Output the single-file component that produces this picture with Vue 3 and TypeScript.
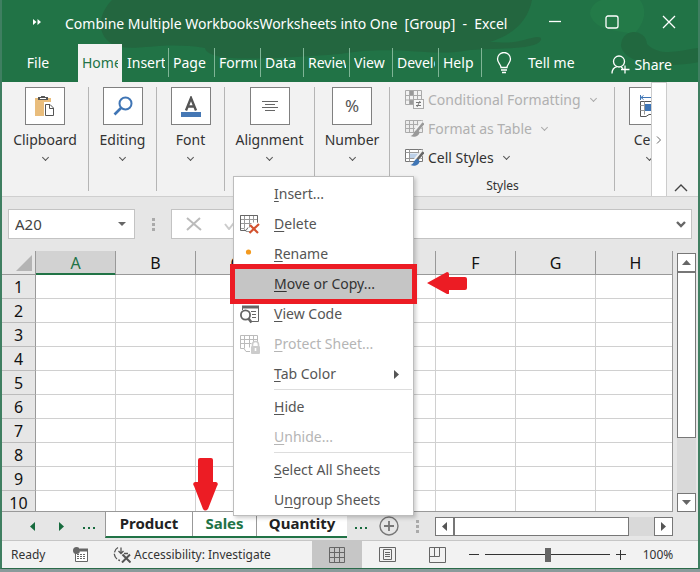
<script setup lang="ts">
import { ref } from 'vue'

interface RibbonTab {
  label: string
  width: string
  active?: boolean
}
interface MenuEntry {
  pre?: string
  key: string
  rest: string
  icon?: 'delete' | 'rename' | 'code' | 'protect'
  disabled?: boolean
  active?: boolean
  submenu?: boolean
  divider?: boolean
}

const tabs: RibbonTab[] = [
  { label: 'Home', width: 'medium', active: true },
  { label: 'Insert', width: 'medium' },
  { label: 'Page Layout', width: 'medium page' },
  { label: 'Formulas', width: 'medium' },
  { label: 'Data', width: 'small' },
  { label: 'Review', width: 'medium' },
  { label: 'View', width: 'small' },
  { label: 'Developer', width: 'medium' },
  { label: 'Help', width: 'small' },
]

const menu: MenuEntry[] = [
  { key: 'I', rest: 'nsert...' },
  { key: 'D', rest: 'elete', icon: 'delete' },
  { key: 'R', rest: 'ename', icon: 'rename' },
  { key: 'M', rest: 'ove or Copy...', active: true },
  { key: 'V', rest: 'iew Code', icon: 'code' },
  { key: 'P', rest: 'rotect Sheet...', icon: 'protect', disabled: true },
  { key: 'T', rest: 'ab Color', submenu: true },
  { key: 'H', rest: 'ide', divider: true },
  { key: 'U', rest: 'nhide...', disabled: true },
  { key: 'S', rest: 'elect All Sheets', divider: true },
  { pre: 'U', key: 'n', rest: 'group Sheets' },
]

const columns = ['A', 'B', 'C', 'D', 'E', 'F', 'G', 'H']
const rows = Array.from({ length: 10 }, (_, i) => i + 1)
const cellName = ref('A20')
const formula = ref('')
const zoom = ref(50)
</script>

<template>
  <div class="window">
    <header class="top">
      <svg class="pattern" viewBox="0 0 700 82" preserveAspectRatio="xMidYMin slice" aria-hidden="true">
        <path d="M112 0C98 14 96 34 112 44C130 54 160 40 205 48C208 62 260 60 340 54C400 44 430 58 470 50C500 48 536 50 541 40C542 35 534 37 524 40C510 44 500 42 490 42C515 34 528 20 532 0Z" fill="#23663f" />
        <path d="M590 14c0-10 12-18 24-14h26c10 14 0 28-6 34-20-4-40-4-44-20z" fill="#237a48" />
        <path d="M621 46a13 13 0 0 1 26-2c14 14 34 6 52 4v14c-30 6-74 4-78-16z" fill="#21683f" />
      </svg>
      <div class="titlebar">
        <button class="more-quick" aria-label="More quick access commands">
          <svg width="8" height="6" viewBox="0 0 8 6"><path d="M0 0l3.500 3L0 6zM4.500 0L8 3 4.500 6z" fill="#fff" /></svg>
        </button>
        <h1>Combine Multiple WorkbooksWorksheets into One&nbsp; [Group]&nbsp; -&nbsp; Excel</h1>
        <div class="window-buttons">
          <button aria-label="Minimize"><svg width="14" height="14" viewBox="0 0 14 14"><path d="M1 6.500h12" /></svg></button>
          <button aria-label="Maximize"><svg width="14" height="14" viewBox="0 0 14 14"><rect x="1" y="1" width="12" height="12" rx="2" /></svg></button>
          <button aria-label="Close"><svg width="14" height="14" viewBox="0 0 14 14"><path d="M1 1l12 12M13 1L1 13" /></svg></button>
        </div>
      </div>
      <nav class="tabs">
        <button class="file">File</button>
        <button v-for="t in tabs" :key="t.label" class="tab" :class="[t.width, { active: t.active }]"><span>{{ t.label }}</span></button>
        <button class="tell">
          <svg width="16" height="22" viewBox="0 0 16 22" fill="none" stroke="#fff" stroke-width="1.300"><path d="M5 15.500C5 12.500 1.500 11 1.500 7a6.500 6.500 0 0 1 13 0c0 4-3.500 5.500-3.500 8.500z" /><path d="M5 18h6M6 20.500h4" stroke-width="1.600" /></svg>
          <span>Tell me</span>
        </button>
        <button class="share">
          <svg width="19" height="20" viewBox="0 0 19 20" fill="none" stroke="#fff" stroke-width="1.300"><circle cx="8" cy="6.500" r="5.500" /><path d="M1 18.500c0-4 2-6 5-6.800M10 12l2 1.500M14 10.500v8M10 14.500h8.500" /></svg>
          <span>Share</span>
        </button>
      </nav>
    </header>

    <section class="ribbon">
      <div class="group clipboard">
        <button><span class="box">
          <svg width="20" height="21" viewBox="0 0 20 21"><rect x="0" y="2" width="16" height="18" fill="#e9bd7c" /><path d="M3 1h3a2 2 0 0 1 4 0h3v3H3z" fill="#555" /><path d="M5 2.500h6" stroke="#fff" /><path d="M10.500 7.500h5l3 3V19.500h-8z" fill="#fff" stroke="#fff" stroke-width="3" /><path d="M10.500 8.500h4.500l3.500 3.500v7.500h-8zM14.500 8.500v4h4" fill="#fff" stroke="#555" /></svg>
        </span><span>Clipboard</span><i class="chev" /></button>
      </div>
      <div class="group">
        <button><span class="box">
          <svg width="20" height="20" viewBox="0 0 20 20" fill="none" stroke="#3f75b5" stroke-width="2"><circle cx="12.500" cy="7.500" r="6" /><path d="M8 12L1.500 18.500" stroke-width="2.600" /></svg>
        </span><span>Editing</span><i class="chev" /></button>
      </div>
      <div class="group">
        <button><span class="box">
          <svg width="20" height="21" viewBox="0 0 20 21"><path d="M5 14.500L10 2l5 12.500M7 10.500h6" fill="none" stroke="#555" stroke-width="2.400" /><rect y="16" width="20" height="5" fill="#4577b4" /></svg>
        </span><span>Font</span><i class="chev" /></button>
      </div>
      <div class="group alignment">
        <button><span class="box">
          <svg width="16" height="12" viewBox="0 0 16 12" stroke="#666"><path d="M0 1.500h16M3 4.500h10M0 7.500h16M3 10.500h10" /></svg>
        </span><span>Alignment</span><i class="chev" /></button>
      </div>
      <div class="group number">
        <button><span class="box percent">%</span><span>Number</span><i class="chev" /></button>
      </div>
      <div class="group styles">
        <button disabled>
          <svg width="19" height="19" viewBox="0 0 19 19" fill="none" stroke="#aaa"><path d="M.5.500h16v14H.5zM.5 5.500h16M.5 10h16M4.500.500v14M8.500.500v14M12.500.500v14" /><path d="M4.500.500h4v5h-4zM4.500 10h4v4.500h-4z" fill="#999" /><rect x="8.500" y="9.500" width="10" height="9" fill="#f7f7f7" /><path d="M11 12.500h5M11 15.500h5M15 11l-3 6" stroke="#777" /></svg>
          <span>Conditional Formatting</span><i class="chev" />
        </button>
        <button disabled>
          <svg width="19" height="19" viewBox="0 0 19 19" fill="none" stroke="#aaa"><path d="M.5 1.500h17v12H.5z" fill="#ececec" /><path d="M.5 5.500h17M.5 9.500h17M4.500 1.500v12M8.500 1.500v12M12.500 1.500v12" /><path d="M18.500 3L11 12" stroke="#f2f2f2" stroke-width="5" /><path d="M18.500 4L12 12" stroke="#999" stroke-width="2.600" /><path d="M12.500 11c-4 0-3 5-7 6 4 2 9 0 9-4z" fill="#999" stroke="none" /></svg>
          <span>Format as Table</span><i class="chev" />
        </button>
        <button>
          <svg width="19" height="19" viewBox="0 0 19 19" fill="none" stroke="#777"><path d="M.5 1.500h17v12H.5z" fill="#fff" /><path d="M4.500 5.500h10v5h-10z" fill="#bcd0e8" stroke="none" /><path d="M.5 4.500h17M.5 10.500h17M4.500 1.500v12M13.500 1.500v12" stroke="#999" /><path d="M18.500 3L11 12" stroke="#f2f2f2" stroke-width="5" /><path d="M18.500 4L12 12" stroke="#666" stroke-width="2.600" /><path d="M12.500 11c-4 0-3 5-7 6 4 2 9 0 9-4z" fill="#3f75b5" stroke="none" /></svg>
          <span>Cell Styles</span><i class="chev" />
        </button>
        <h2>Styles</h2>
      </div>
      <div class="group cells">
        <button><span class="box">
          <svg width="20" height="22" viewBox="0 0 20 22" fill="none" stroke="#555"><path d="M1 2.500h18M1.500 0v5M18.500 0v5M4.500.500L2 2.500l2.500 2" stroke="#3f75b5" /><path d="M1.500 6.500h17v13H10l-3 2H1.500z" /><path d="M1.500 10.500h17M1.500 15.500h17M5.500 6.500v13M14.500 6.500v13" stroke="#999" /><path d="M6 9h8v7H6z" fill="#3f75b5" stroke="none" /></svg>
        </span><span>Cells</span><i class="chev" /></button>
      </div>
      <button class="scroll-ribbon" aria-label="Scroll ribbon"><svg width="6" height="8" viewBox="0 0 6 8" fill="none" stroke="#666"><path d="M1 .5L4.500 4 1 7.500" /></svg></button>
      <button class="collapse" aria-label="Collapse ribbon"><svg width="14" height="8" viewBox="0 0 14 8" fill="none" stroke="#444" stroke-width="1.400"><path d="M1 7l6-6 6 6" /></svg></button>
    </section>

    <section class="formula-bar">
      <div class="name-box">
        <input v-model="cellName" aria-label="Name box" />
        <button aria-label="Show names"><svg width="8" height="4" viewBox="0 0 8 4"><path d="M0 0h8L4 4z" fill="#666" /></svg></button>
      </div>
      <span class="grip"><i /><i /><i /></span>
      <div class="formula">
        <button aria-label="Cancel"><svg width="16" height="14" viewBox="0 0 16 14" fill="none" stroke="#bbb" stroke-width="2"><path d="M1 1l14 12M14 1L1 13" /></svg></button>
        <button aria-label="Enter"><svg width="14" height="12" viewBox="0 0 14 12" fill="none" stroke="#ccc" stroke-width="2"><path d="M1 6l4 5 8-10" /></svg></button>
        <input v-model="formula" aria-label="Formula" />
        <button aria-label="Expand formula bar"><svg width="10" height="7" viewBox="0 0 10 7" fill="none" stroke="#666" stroke-width="2.400"><path d="M1 1l4 4 4-4" /></svg></button>
      </div>
    </section>

    <section class="sheet">
      <div class="grid-wrap">
        <table>
          <colgroup><col class="row-col" /><col v-for="c in columns" :key="c" class="cell-col" /></colgroup>
          <thead>
            <tr>
              <th class="corner"><svg width="16" height="16" viewBox="0 0 16 16"><path d="M16 0v16H0z" fill="#b4b4b4" /></svg></th>
              <th v-for="c in columns" :key="c" scope="col" :class="{ selected: c === 'A' }">{{ c }}</th>
            </tr>
          </thead>
          <tbody>
            <tr v-for="r in rows" :key="r"><th scope="row">{{ r }}</th><td v-for="c in columns" :key="c" /></tr>
          </tbody>
        </table>
      </div>
      <div class="vscroll">
        <button aria-label="Scroll up"><svg width="9" height="5" viewBox="0 0 9 5"><path d="M0 5h9L4.500 0z" fill="#666" /></svg></button>
        <div class="vthumb" />
        <div class="vtrack" />
        <button aria-label="Scroll down"><svg width="9" height="5" viewBox="0 0 9 5"><path d="M0 0h9L4.500 5z" fill="#666" /></svg></button>
      </div>
    </section>

    <section class="sheet-bar">
      <div class="sheet-nav">
        <button aria-label="Previous sheet"><svg width="5" height="9" viewBox="0 0 5 9"><path d="M5 0v9L0 4.500z" fill="#176b3e" /></svg></button>
        <button aria-label="Next sheet"><svg width="5" height="9" viewBox="0 0 5 9"><path d="M0 0v9l5-4.500z" fill="#176b3e" /></svg></button>
        <button class="dots" aria-label="More sheets"><i /><i /><i /></button>
      </div>
      <div class="sheet-tabs">
        <button>Product</button>
        <button class="current">Sales</button>
        <button>Quantity</button>
      </div>
      <button class="dots" aria-label="More sheets"><i /><i /><i /></button>
      <button class="add" aria-label="New sheet"><svg width="20" height="20" viewBox="0 0 20 20" fill="none" stroke="#777"><circle cx="10" cy="10" r="9" stroke-width="1.400" /><path d="M10 5v10M5 10h10" stroke-width="1.800" /></svg></button>
      <span class="grip"><i /><i /><i /></span>
      <div class="hscroll">
        <button aria-label="Scroll left"><svg width="5" height="9" viewBox="0 0 5 9"><path d="M5 0v9L0 4.500z" fill="#555" /></svg></button>
        <div class="hthumb" />
        <div class="htrack" />
        <button aria-label="Scroll right"><svg width="5" height="9" viewBox="0 0 5 9"><path d="M0 0v9l5-4.500z" fill="#555" /></svg></button>
      </div>
    </section>

    <footer class="status">
      <span class="ready">Ready</span>
      <button class="macro" aria-label="Record macro"><svg width="15" height="15" viewBox="0 0 15 15"><path d="M2.500 2.500h12v12h-12z" fill="#fff" stroke="#666" /><path d="M7 1.500h8v3H7z" fill="#666" /><path d="M4 7.500h9M4 9.500h9M4 11.500h9" stroke="#666" stroke-dasharray="2 1" /><circle cx="3.500" cy="3.500" r="3.500" fill="#666" /></svg></button>
      <button class="access"><svg width="19" height="17" viewBox="0 0 19 17" fill="none" stroke="#555" stroke-width="1.300"><path d="M6 1.500a7 7 0 0 0 2 13" stroke-dasharray="6 1.500" /><path d="M9 1.500v6M6.500 5L9 7.500 11.500 5M12 7.500h4" /><path d="M10.500 8.500l8 8M18 8.500l-8 8" stroke-width="2" /></svg><span>Accessibility: Investigate</span></button>
      <div class="views">
        <button class="on" aria-label="Normal view"><svg width="16" height="16" viewBox="0 0 16 16" fill="none" stroke="#666"><path d="M.5.500h15v15H.5zM.5 5.500h15M.5 10.500h15M5.500.500v15M10.500.500v15" /></svg></button>
        <button aria-label="Page layout view"><svg width="17" height="15" viewBox="0 0 17 15" fill="none" stroke="#666"><path d="M.5.500h16v14H.5zM4.500 2.500h8v10h-8zM6 5.500h5M6 7.500h5M6 9.500h5" /></svg></button>
        <button aria-label="Page break preview"><svg width="17" height="16" viewBox="0 0 17 16" fill="none" stroke="#666"><path d="M.5.500h16v15H.5zM.5 9.500h10v-9M5.500.500v9" /></svg></button>
      </div>
      <div class="zoom">
        <button aria-label="Zoom out"><svg width="10" height="10" viewBox="0 0 10 10" stroke="#333"><path d="M0 4.500h10" /></svg></button>
        <input v-model.number="zoom" type="range" min="0" max="100" aria-label="Zoom" />
        <button aria-label="Zoom in"><svg width="10" height="10" viewBox="0 0 10 10" stroke="#333"><path d="M0 4.500h10M4.500 0v10" /></svg></button>
      </div>
      <button class="percentage">100%</button>
    </footer>

    <div class="menu" role="menu">
      <template v-for="m in menu" :key="m.rest">
        <hr v-if="m.divider" />
        <button role="menuitem" :disabled="m.disabled" :class="{ active: m.active }">
          <span class="mi">
            <svg v-if="m.icon === 'delete'" width="20" height="19" viewBox="0 0 20 19" fill="none" stroke="#999"><path d="M10 16.500H6l-2-3H.5v-13h17V8M.5 4.500h17M.5 8.500h11M4.500.500v13M9.500.500v12M13.500.500v7" /><path d="M17.500 7V.5H.5v15H6l2-3" stroke="#666" /><path d="M10 10l8 8M19 9l-9.500 9" stroke="#d3522f" stroke-width="2.200" /></svg>
            <svg v-else-if="m.icon === 'rename'" width="20" height="19" viewBox="0 0 20 19"><circle cx="8.500" cy="7" r="2.600" fill="#f39a1f" /></svg>
            <svg v-else-if="m.icon === 'code'" width="20" height="19" viewBox="0 0 20 19" fill="none" stroke="#666"><path d="M2.500 5V1.500h16v15h-8" /><path d="M2 2h17" stroke-width="3" /><path d="M11 6.500h5M12 9.500h4M12 12.500h4" /><circle cx="5.500" cy="10" r="4.600" stroke-width="1.800" fill="#fff" /><path d="M8.500 13.500l3 4" stroke-width="2.600" /></svg>
            <svg v-else-if="m.icon === 'protect'" width="20" height="19" viewBox="0 0 20 19" fill="none" stroke="#bbb"><path d="M10 16.500H6l-2-3H.5v-13h17V8M.5 4.500h17M.5 8.500h11M4.500.500v13M9.500.500v12M13.500.500v7" /><rect x="11" y="11" width="9" height="8" rx="1" fill="#ccc" stroke="none" /><path d="M12.500 11V9.500a3 3 0 0 1 6 0V11" stroke="#ccc" stroke-width="1.600" /><path d="M15.500 13v3" stroke="#fff" stroke-width="1.600" /></svg>
          </span>
          <span class="ml">{{ m.pre }}<u>{{ m.key }}</u>{{ m.rest }}</span>
          <svg v-if="m.submenu" width="5" height="9" viewBox="0 0 5 9"><path d="M0 0v9l5-4.500z" fill="#555" /></svg>
        </button>
      </template>
    </div>
    <svg class="arrow left" width="40" height="22" viewBox="0 0 40 22"><path d="M0 11L20 0q2 0 2 2v3h16q2 0 2 2v9q0 2-2 2H22v3q0 2-2 1z" fill="#ec1c24" /></svg>
    <svg class="arrow down" width="25" height="53" viewBox="0 0 25 53"><path d="M7 0h11q2 0 2 2v22h3q3 1 1 4L15 51q-3 3-5 0L1 28q-2-3 1-4h3V2q0-2 2-2z" fill="#ec1c24" /></svg>
  </div>
</template>

<style>
body { background: #8a9b9b; }
</style>

<style scoped>
* { box-sizing: border-box; }
button { font: inherit; color: inherit; background: none; border: 0; padding: 0; margin: 0; display: flex; align-items: center; justify-content: center; }
input { font: inherit; color: inherit; border: 0; background: none; padding: 0; margin: 0; min-width: 0; outline: 0; }
svg { flex: none; display: block; }
.window { position: relative; display: flex; flex-direction: column; height: calc(100vh - 3px); border: 2px solid #3f7f61; border-top: 0; border-bottom: 1px solid #2b6b4a; background: #e6e6e6; font: 14px/20px "Noto Sans", "Open Sans", sans-serif; color: #333; overflow: hidden; }

.top { position: relative; flex: none; background: #217346; color: #fff; overflow: hidden; }
.pattern { position: absolute; inset: 0; width: 100%; height: 100%; }
.titlebar, .tabs { position: relative; display: flex; }
.titlebar { height: 44px; align-items: center; padding-left: 31px; }
.more-quick { width: 8px; height: 20px; }
h1 { flex: 1; margin: 0 0 0 24px; font-size: 14px; font-weight: 400; line-height: 20px; padding-top: 4px; white-space: nowrap; }
.window-buttons { display: flex; padding-right: 1px; }
.window-buttons button { width: 57px; height: 38px; }
.window-buttons svg { fill: none; stroke: #fff; stroke-width: 1.300; }
.tabs { height: 38px; align-items: stretch; }
.file { width: 72px; margin-right: 4px; }
.tab { position: relative; justify-content: flex-start; padding: 0 4px; overflow: hidden; }
.tab span { overflow: hidden; white-space: nowrap; }
.tab::after { content: ""; position: absolute; right: 0; top: 4px; bottom: 5px; width: 1px; background: #7fb596; }
.medium { width: 46px; }
.small { width: 43px; }
.page span { width: 34px; }
.active.tab { width: 44px; margin-right: 1px; background: #f2f2f2; color: #217346; }
.active.tab::after { display: none; }
.tell { margin-left: 14px; gap: 16px; white-space: nowrap; }
.share { margin: 4px 26px 0 auto; gap: 4px; }

.ribbon { flex: none; display: flex; height: 115px; background: #f2f2f2; border-bottom: 1px solid #cfcfcf; }
.group { flex: none; width: 68px; margin: 5px 0; border-right: 1px solid #b5b5b5; }
.group > button { flex-direction: column; width: 100%; white-space: nowrap; }
.clipboard { width: 87px; }
.alignment { width: 90px; }
.number { width: 75px; }
.box { display: flex; align-items: center; justify-content: center; width: 40px; height: 38px; margin-bottom: 5px; border: 1px solid #808080; background: #fff; }
.percent { font-size: 17px; color: #555; }
.chev { width: 5px; height: 5px; margin: 5px 0; border: solid #555; border-width: 0 1px 1px 0; transform: rotate(45deg); }
.styles { width: 225px; padding-left: 15px; display: flex; flex-direction: column; }
.group.styles > button { flex: none; flex-direction: row; justify-content: flex-start; gap: 4px; height: 29px; padding-bottom: 4px; }
.styles > button:disabled { color: #b0b0b0; }
.group.styles .chev { margin: 0 0 3px 6px; }
.styles > button:disabled .chev { border-color: #aaa; }
h2 { flex: none; margin: 4px 0 0; font-size: 12px; font-weight: 400; line-height: 16px; text-align: center; padding-right: 14px; }
.cells { width: auto; flex: 1; min-width: 0; overflow: hidden; border: 0; padding-left: 14px; }
.cells > button { width: 40px; }
.scroll-ribbon { width: 16px; background: #fff; border: 1px solid #ccc; border-bottom: 0; }
.collapse { width: 31px; align-items: flex-end; padding: 0 4px 4px 0; }

.formula-bar { flex: none; display: flex; height: 54px; padding: 12px 6px; }
.name-box, .formula { display: flex; height: 30px; background: #fff; border: 1px solid #c3c3c3; }
.name-box { width: 127px; padding: 0 8px 0 6px; font-size: 15px; color: #444; }
.name-box input { flex: 1; }
.grip { display: flex; flex-direction: column; justify-content: center; gap: 2px; width: 36px; align-items: center; }
.grip i { width: 3px; height: 3px; background: #aaa; }
.formula { flex: 1; padding: 0 5px 0 14px; gap: 22px; }
.formula input { flex: 1; }

.sheet { flex: 1; min-height: 0; display: flex; }
.grid-wrap { flex: 1; min-width: 0; overflow: hidden; border-right: 1px solid #999; border-bottom: 1px solid #999; }
table { table-layout: fixed; border-collapse: separate; border-spacing: 0; width: 674px; font-size: 16px; line-height: 20px; background: #fff; }
.row-col { width: 34px; }
.cell-col { width: 80px; }
th { font-weight: 400; padding: 0; background: #e6e6e6; color: #111; border-right: 1px solid #999; border-bottom: 1px solid #999; }
thead th { height: 24px; }
tbody th { border-bottom-color: #bbb; }
td { height: 24px; padding: 0; border-right: 1px solid #d0d0d0; border-bottom: 1px solid #d0d0d0; }
thead th.selected { background: #d2d2d2; color: #217346; border-bottom-color: #217346; box-shadow: inset 0 -1px #217346; }
.corner svg { margin-left: 14px; }
.vscroll { display: flex; flex-direction: column; width: 25px; padding: 2px 2px 0 4px; }
.vscroll button { height: 19px; border: 1px solid #777; background: #fff; }
.vthumb { flex: 3; border: 1px solid #777; background: #fff; }
.vtrack { flex: 1; background: #d9d9d9; }

.sheet-bar { flex: none; display: flex; height: 29px; align-items: center; border-bottom: 1px solid #c6c6c6; }
.sheet-nav { display: flex; width: 103px; padding-left: 28px; gap: 24px; }
.dots { gap: 3px; width: 18px; height: 20px; align-items: flex-end; padding-bottom: 7px; }
.dots i { width: 2px; height: 2px; background: #176b3e; }
.sheet-nav .dots { margin-left: -8px; }
.sheet-tabs { display: flex; align-self: flex-start; height: 26px; background: #fff; border-left: 1px solid #999; border-bottom: 2px solid #217346; font-weight: 700; font-size: 15px; color: #222; }
.sheet-tabs button { width: 87px; padding-bottom: 2px; border-right: 1px solid #999; }
.sheet-tabs .current { width: 64px; color: #217346; }
.sheet-tabs button:last-child { width: 90px; border: 0; }
.sheet-tabs + .dots { width: 28px; }
.add { margin-left: 4px; width: 20px; }
.sheet-bar .grip { width: 36px; }
.hscroll { flex: 1; display: flex; height: 19px; margin-right: 25px; }
.hscroll button { width: 19px; border: 1px solid #777; background: #fff; }
.hthumb { flex: 7; border: 1px solid #777; background: #fff; }
.htrack { flex: 1; background: #d9d9d9; }

.status { flex: none; display: flex; height: 27px; align-items: center; padding-left: 9px; background: #f2f2f2; font-size: 12px; white-space: nowrap; }
.ready { width: 62px; }
.macro { margin-right: 24px; }
.access { gap: 3px; }
.views { display: flex; margin-left: auto; height: 100%; }
.views button { width: 50px; }
.views .on { background: #c6c6c6; }
.zoom { display: flex; align-items: center; gap: 6px; margin-left: 7px; }
.zoom input { appearance: none; width: 125px; height: 16px; background: linear-gradient(#333, #333) center / 100% 1px no-repeat; }
.zoom input::-webkit-slider-thumb { appearance: none; width: 6px; height: 14px; background: #666; }
.percentage { width: 72px; padding-right: 8px; }

.menu { position: absolute; left: 231px; top: 176px; width: 181px; padding: 2px 0 0; border: 1px solid #bdbdbd; background: #fff; box-shadow: 2px 2px 4px rgba(0, 0, 0, .2); color: #555; }
.menu button { width: 100%; height: 30px; padding: 0 14px 0 6px; gap: 14px; }
.menu button:disabled { color: #b5b5b5; }
.menu .active { position: relative; background: #c5c5c5; color: #333; }
.menu .active::after { content: ""; position: absolute; inset: -5px -4px; border: 5px solid #ec1c24; }
.menu hr { margin: 0 1px 2px 40px; border: 0; border-top: 1px solid #ddd; }
.mi { width: 20px; }
.ml { flex: 1; text-align: left; white-space: nowrap; }
u { text-underline-offset: 2px; }
.arrow { position: absolute; }
.arrow.left { left: 425px; top: 272px; }
.arrow.down { left: 191px; top: 458px; }
</style>
